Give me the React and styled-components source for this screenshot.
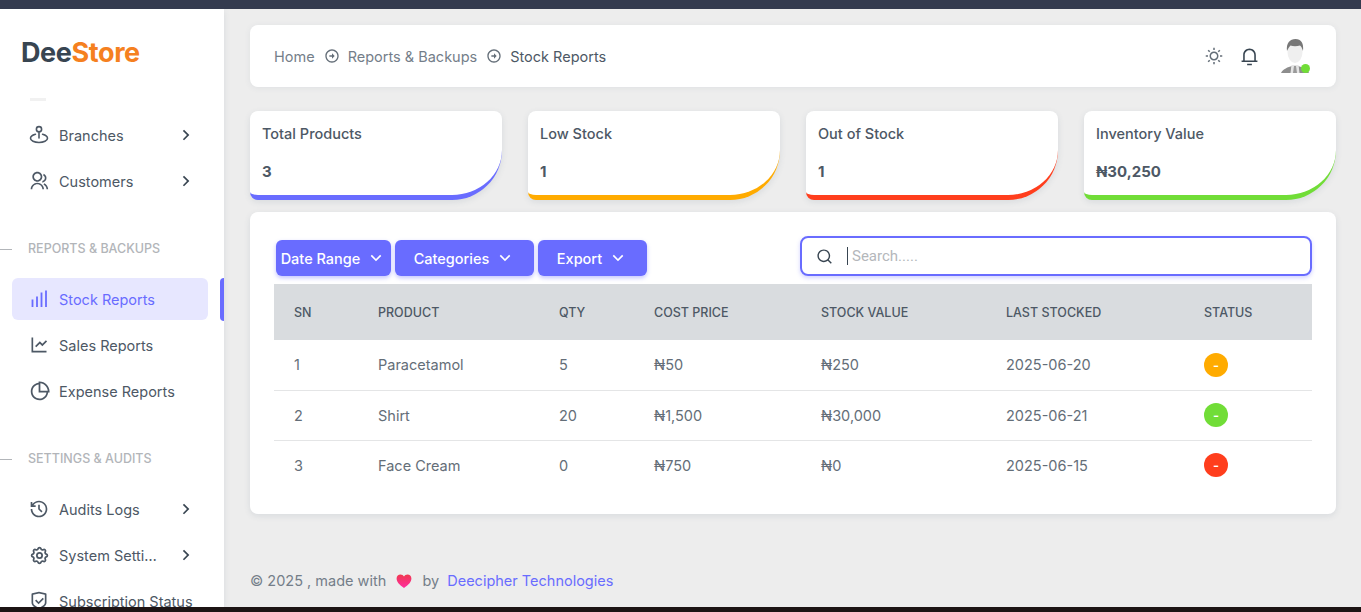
import React from "react";
import styled, { createGlobalStyle } from "styled-components";
import {
  RiArrowDownSLine,
  RiArrowRightCircleLine,
  RiArrowRightSLine,
  RiGroupLine,
  RiHistoryLine,
  RiLineChartLine,
  RiNotification3Line,
  RiPieChart2Line,
  RiSearchLine,
  RiShieldCheckLine,
  RiSunLine,
} from "react-icons/ri";
import { TbSettings } from "react-icons/tb";

const primary = "#696cff";

const BranchIcon = () => (
  <svg width="20" height="20" viewBox="0 0 20 20" fill="none" stroke="currentColor" strokeWidth="1.6" strokeLinecap="round">
    <circle cx="10" cy="4.2" r="2.6" />
    <path d="M10 6.8V13" />
    <path d="M6.4 9.2C3.4 10 1.5 11.4 1.5 13.2c0 2.4 3.8 4.3 8.5 4.3s8.5-1.9 8.5-4.3c0-1.8-1.9-3.2-4.9-4" />
  </svg>
);

const BarsIcon = () => (
  <svg width="20" height="20" viewBox="0 0 20 20" fill="none" stroke="currentColor" strokeWidth="1.8">
    <path d="M3.5 10.5V18M8 7.5V18M12.5 3.5V18M17 1.5V18" />
  </svg>
);

const HeartIcon = () => (
  <svg width="16" height="16" viewBox="0 0 16 16">
    <defs>
      <linearGradient id="heartFill" x1="0" y1="0" x2="0" y2="1">
        <stop offset="0" stopColor="#f0394f" />
        <stop offset="1" stopColor="#ff2da0" />
      </linearGradient>
    </defs>
    <path d="M8 15C3.6 11.6.6 9 .6 5.4.6 3 2.400 1.400 4.500 1.400 6 1.400 7.300 2.200 8 3.500c.7-1.300 2-2.100 3.500-2.100 2.100 0 3.900 1.600 3.900 4 0 3.600-3 6.200-7.400 9.600z" fill="url(#heartFill)" />
  </svg>
);

const AvatarArt = () => (
  <svg width="30" height="38" viewBox="0 0 30 38">
    <path d="M1 36c2-4 7-6 11-7l-1 7z" fill="#8d8d8d" />
    <path d="M29 36c-2-4-7-6-11-7l1 7z" fill="#8d8d8d" />
    <path d="M11.500 28h7l1 8h-9z" fill="#e4e4e4" />
    <path d="M14 29h2l1 7h-4z" fill="#9a9a9a" />
    <ellipse cx="15" cy="15" rx="7.500" ry="11" fill="#efefef" />
    <path d="M7 14C6 6 10 2 15.500 2 21 2 24 6 23 14c-1-3-2-5-3-5.500-3 1-7 1-9.500 0C9 10 8 12 7 14z" fill="#777" />
  </svg>
);

const navTop = [
  { label: "Branches", icon: <BranchIcon />, arrow: true },
  { label: "Customers", icon: <RiGroupLine size={20} />, arrow: true },
];
const navReports = [
  { label: "Stock Reports", icon: <BarsIcon />, active: true },
  { label: "Sales Reports", icon: <RiLineChartLine size={20} /> },
  { label: "Expense Reports", icon: <RiPieChart2Line size={21} /> },
];
const navSettings = [
  { label: "Audits Logs", icon: <RiHistoryLine size={20} />, arrow: true },
  { label: "System Settings", icon: <TbSettings size={21} />, arrow: true },
  { label: "Subscription Status", icon: <RiShieldCheckLine size={20} /> },
];

const stats = [
  { title: "Total Products", value: "3", color: primary },
  { title: "Low Stock", value: "1", color: "#ffab00" },
  { title: "Out of Stock", value: "1", color: "#ff3e1d" },
  { title: "Inventory Value", value: "₦30,250", color: "#71dd37" },
];

const rows = [
  { sn: 1, product: "Paracetamol", qty: 5, cost: "₦50", value: "₦250", date: "2025-06-20", color: "#ffab00" },
  { sn: 2, product: "Shirt", qty: 20, cost: "₦1,500", value: "₦30,000", date: "2025-06-21", color: "#71dd37" },
  { sn: 3, product: "Face Cream", qty: 0, cost: "₦750", value: "₦0", date: "2025-06-15", color: "#ff3e1d" },
];

const columns = [
  ["SN", 84],
  ["Product", 181],
  ["Qty", 95],
  ["Cost Price", 167],
  ["Stock Value", 185],
  ["Last Stocked", 198],
  ["Status", 128],
];

const NavList = ({ items }) =>
  items.map((item) => (
    <NavItem key={item.label} $active={item.active}>
      <NavIcon>{item.icon}</NavIcon>
      <NavLabel>{item.label}</NavLabel>
      {item.arrow && (
        <NavArrow>
          <RiArrowRightSLine size={20} />
        </NavArrow>
      )}
      {item.active && <ActiveMark />}
    </NavItem>
  ));

export default function App() {
  return (
    <>
      <GlobalStyle />
      <Page>
        <Sidebar>
          <Logo>
            Dee<span>Store</span>
          </Logo>
          <ClippedItem />
          <Nav>
            <NavList items={navTop} />
            <SectionTitle>Reports &amp; Backups</SectionTitle>
            <NavList items={navReports} />
            <SectionTitle>Settings &amp; Audits</SectionTitle>
            <NavList items={navSettings} />
          </Nav>
        </Sidebar>

        <Main>
          <TopBar>
            <Crumbs>
              <Crumb>Home</Crumb>
              <CrumbIcon>
                <RiArrowRightCircleLine size={16} />
              </CrumbIcon>
              <Crumb>Reports &amp; Backups</Crumb>
              <CrumbIcon>
                <RiArrowRightCircleLine size={16} />
              </CrumbIcon>
              <Crumb $current>Stock Reports</Crumb>
            </Crumbs>
            <TopActions>
              <SunButton>
                <RiSunLine size={18} />
              </SunButton>
              <BellButton>
                <RiNotification3Line size={19} />
              </BellButton>
              <Avatar>
                <AvatarArt />
                <OnlineDot />
              </Avatar>
            </TopActions>
          </TopBar>

          <StatGrid>
            {stats.map((s) => (
              <StatCard key={s.title} $color={s.color}>
                <StatTitle>{s.title}</StatTitle>
                <StatValue>{s.value}</StatValue>
              </StatCard>
            ))}
          </StatGrid>

          <TableCard>
            <Toolbar>
              <Buttons>
                <DropButton $w={115}>
                  Date Range <RiArrowDownSLine size={20} />
                </DropButton>
                <DropButton $w={139}>
                  Categories <RiArrowDownSLine size={20} />
                </DropButton>
                <DropButton $w={109}>
                  Export <RiArrowDownSLine size={20} />
                </DropButton>
              </Buttons>
              <SearchBox>
                <RiSearchLine size={17} />
                <Caret />
                <SearchInput placeholder="Search....." />
              </SearchBox>
            </Toolbar>
            <Table>
              <colgroup>
                {columns.map(([name, w]) => (
                  <col key={name} width={w} />
                ))}
              </colgroup>
              <thead>
                <tr>
                  {columns.map(([name]) => (
                    <Th key={name}>{name}</Th>
                  ))}
                </tr>
              </thead>
              <tbody>
                {rows.map((r) => (
                  <tr key={r.sn}>
                    <Td>{r.sn}</Td>
                    <Td>{r.product}</Td>
                    <Td>{r.qty}</Td>
                    <Td>{r.cost}</Td>
                    <Td>{r.value}</Td>
                    <Td>{r.date}</Td>
                    <Td>
                      <StatusDot $color={r.color}>-</StatusDot>
                    </Td>
                  </tr>
                ))}
              </tbody>
            </Table>
          </TableCard>

          <Footer>
            © 2025 , made with <HeartWrap><HeartIcon /></HeartWrap> by <FooterLink>Deecipher Technologies</FooterLink>
          </Footer>
        </Main>
      </Page>
    </>
  );
}

const GlobalStyle = createGlobalStyle`
  * { box-sizing: border-box; }
  html, body { height: 100%; }
  body {
    margin: 0;
    overflow: hidden;
    background: #ededed;
    font-family: "Inter", "Liberation Sans", sans-serif;
    font-size: 14px;
    color: #646e78;
  }
`;

const Page = styled.div`
  height: 612px;
  display: flex;
  overflow: hidden;
  border-top: 9px solid #343b4f;
  border-bottom: 5px solid #1d1414;
`;

const Sidebar = styled.aside`
  width: 224px;
  flex-shrink: 0;
  background: #fff;
  overflow: hidden;
  position: relative;
  box-shadow: 0 2px 6px rgba(67, 89, 113, 0.12);
`;

const Logo = styled.div`
  height: 89px;
  padding: 27px 0 0 21px;
  font-size: 27px;
  line-height: 33px;
  font-weight: 700;
  letter-spacing: -0.4px;
  color: #384551;

  span {
    color: #f58020;
  }
`;

const ClippedItem = styled.div`
  width: 16px;
  height: 3px;
  margin-left: 30px;
  background: #f1f1f1;
`;

const Nav = styled.nav`
  padding-top: 13px;
`;

const NavItem = styled.div`
  position: relative;
  display: flex;
  align-items: center;
  height: 42px;
  margin: 0 16px 4px 12px;
  padding: 0 12px 0 17px;
  border-radius: 6px;
  color: ${({ $active }) => ($active ? primary : "#4d5865")};
  background: ${({ $active }) => ($active ? "#e7e7ff" : "transparent")};
`;

const NavIcon = styled.span`
  width: 30px;
  flex-shrink: 0;
  display: flex;
  align-items: center;
`;

const NavLabel = styled.span`
  flex: 1;
  min-width: 0;
  font-size: 14.5px;
  white-space: nowrap;
  overflow: hidden;
  text-overflow: ellipsis;
`;

const NavArrow = styled.span`
  display: flex;
  margin-left: 16px;
  margin-right: 0;
  color: #384551;
`;

const ActiveMark = styled.span`
  position: absolute;
  right: -16px;
  top: 0;
  width: 4px;
  height: 43px;
  border-radius: 4px 0 0 4px;
  background: ${primary};
`;

const SectionTitle = styled.div`
  position: relative;
  height: 20px;
  margin: 37px 0 19px;
  padding-left: 28px;
  font-size: 12.5px;
  line-height: 20px;
  font-weight: 500;
  text-transform: uppercase;
  color: #b2b5b9;

  &::before {
    content: "";
    position: absolute;
    left: 0;
    top: 10px;
    width: 12px;
    height: 1px;
    background: #b2b5b9;
  }
`;

const Main = styled.main`
  flex: 1;
  min-width: 0;
  padding: 16px 25px 0 26px;
  display: flex;
  flex-direction: column;
`;

const TopBar = styled.header`
  height: 62px;
  display: flex;
  align-items: center;
  justify-content: space-between;
  padding: 0 26px 0 24px;
  background: #fff;
  border-radius: 8px;
  box-shadow: 0 1px 6px rgba(67, 89, 113, 0.08);
`;

const Crumbs = styled.div`
  display: flex;
  align-items: center;
`;

const Crumb = styled.span`
  font-size: 14.5px;
  color: ${({ $current }) => ($current ? "#4d5865" : "#747e89")};
`;

const CrumbIcon = styled.span`
  display: flex;
  margin: 0 8px 0 9px;
  color: #646e78;
`;

const TopActions = styled.div`
  display: flex;
  align-items: center;
`;

const SunButton = styled.span`
  display: flex;
  color: #646e78;
`;

const BellButton = styled.span`
  display: flex;
  margin-left: 17px;
  color: #384551;
`;

const Avatar = styled.div`
  position: relative;
  margin-left: 21px;
  width: 30px;
  height: 38px;
`;

const OnlineDot = styled.span`
  position: absolute;
  right: 0;
  bottom: 2px;
  width: 9px;
  height: 9px;
  border-radius: 50%;
  background: #71dd37;
`;

const StatGrid = styled.section`
  display: grid;
  grid-template-columns: repeat(4, 252px);
  justify-content: space-between;
  margin-top: 24px;
`;

const StatCard = styled.div`
  height: 89px;
  padding: 14px 12px 0;
  background: #fff;
  border-bottom: 5px solid ${({ $color }) => $color};
  border-radius: 8px 8px 50px 8px;
  box-shadow: 0 2px 6px rgba(67, 89, 113, 0.12);
`;

const StatTitle = styled.div`
  font-size: 14.5px;
  line-height: 18px;
  font-weight: 500;
  color: #4d5865;
`;

const StatValue = styled.div`
  margin-top: 20px;
  font-size: 15px;
  line-height: 18px;
  font-weight: 700;
  color: #4d5865;
`;

const TableCard = styled.section`
  margin-top: 12px;
  padding: 24px;
  background: #fff;
  border-radius: 8px;
  box-shadow: 0 2px 6px rgba(67, 89, 113, 0.12);
`;

const Toolbar = styled.div`
  display: flex;
  justify-content: space-between;
  align-items: flex-end;
  margin-bottom: 8px;
`;

const Buttons = styled.div`
  display: flex;
  gap: 4px;
  margin-left: 2px;
`;

const DropButton = styled.button`
  width: ${({ $w }) => $w}px;
  height: 36px;
  display: flex;
  align-items: center;
  justify-content: center;
  gap: 6px;
  padding: 0;
  border: 0;
  border-radius: 6px;
  background: ${primary};
  color: #fff;
  font-family: inherit;
  font-size: 14.5px;
  font-weight: 500;
  box-shadow: 0 2px 4px rgba(105, 108, 255, 0.4);
`;

const SearchBox = styled.div`
  width: 512px;
  height: 40px;
  display: flex;
  align-items: center;
  padding: 0 14px;
  border: 2px solid ${primary};
  border-radius: 8px;
  box-shadow: 0 2px 4px rgba(105, 108, 255, 0.3);
  color: #384551;
`;

const Caret = styled.span`
  width: 1px;
  height: 18px;
  margin: 0 4px 0 14px;
  background: #384551;
`;

const SearchInput = styled.input`
  flex: 1;
  min-width: 0;
  border: 0;
  outline: 0;
  padding: 0;
  font-family: "Roboto", sans-serif;
  font-size: 15px;
  color: #384551;

  &::placeholder {
    color: #b4b7bb;
  }
`;

const Table = styled.table`
  width: 1038px;
  border-collapse: collapse;
  table-layout: fixed;
`;

const Th = styled.th`
  height: 56px;
  padding: 0 20px;
  background: #d9dcdf;
  text-align: left;
  font-size: 12.5px;
  font-weight: 500;
  text-transform: uppercase;
  color: #4d5865;
  white-space: nowrap;
`;

const Td = styled.td`
  height: 50px;
  padding: 0 20px;
  font-size: 14.5px;
  color: #646e78;
  border-bottom: 1px solid #e4e5e6;

  tr:last-child & {
    border-bottom: 0;
  }
`;

const StatusDot = styled.span`
  width: 24px;
  height: 24px;
  display: flex;
  align-items: center;
  justify-content: center;
  border-radius: 50%;
  background: ${({ $color }) => $color};
  color: #fff;
  font-size: 13px;
  font-weight: 600;
`;

const Footer = styled.footer`
  margin-top: 57px;
  display: flex;
  align-items: center;
  font-size: 14.5px;
  line-height: 20px;
  color: #747e89;
  white-space: pre;
`;

const HeartWrap = styled.span`
  display: flex;
  margin: 0 6px;
`;

const FooterLink = styled.a`
  color: ${primary};
  margin-left: 4px;
`;
